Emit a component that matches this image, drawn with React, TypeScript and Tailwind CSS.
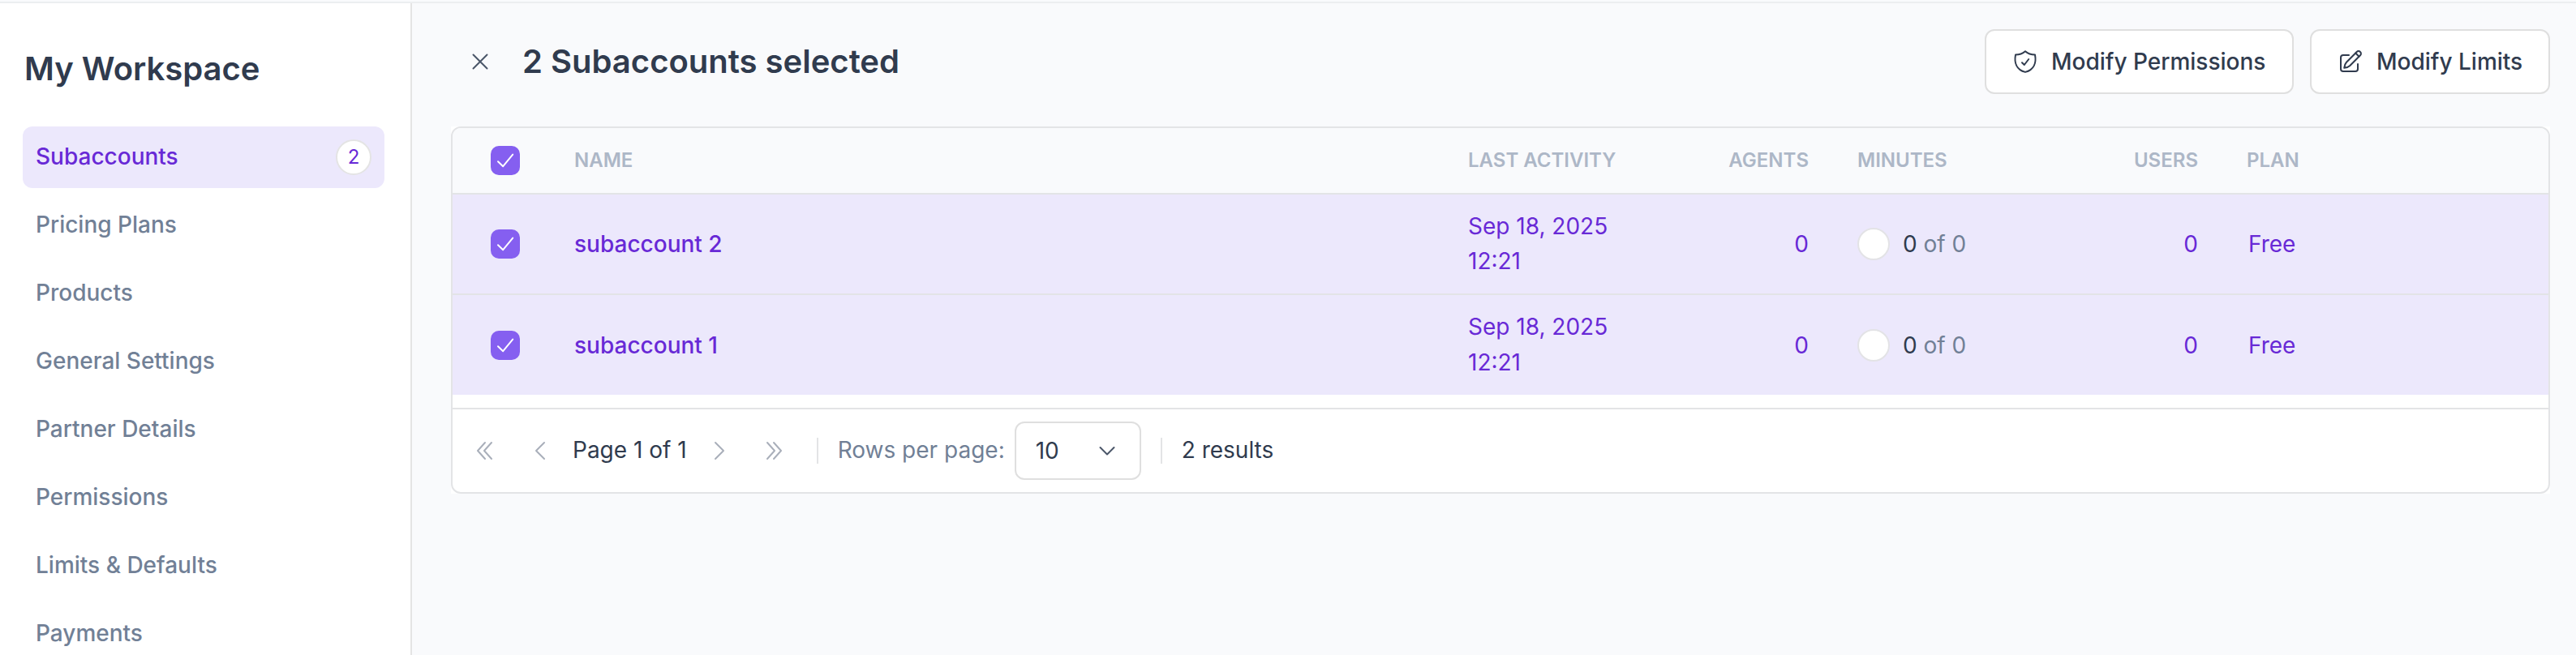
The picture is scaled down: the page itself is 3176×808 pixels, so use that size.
import React from "react";

const NAV = ["Pricing Plans", "Products", "General Settings", "Partner Details", "Permissions", "Limits & Defaults", "Payments"];
const ROWS = ["subaccount 2", "subaccount 1"];

function Check() {
  return (
    <span className="flex size-9 shrink-0 items-center justify-center rounded-[10px] bg-[#855ff0]">
      <svg className="size-9" viewBox="0 0 36 36" fill="none" stroke="#fff" strokeWidth="2" strokeLinecap="round" strokeLinejoin="round">
        <path d="M9 19.2 15.2 25.2 27.2 10.6" />
      </svg>
    </span>
  );
}

function Glyph({ d, className }: { d: string; className: string }) {
  return (
    <svg className={className} viewBox="0 0 32 32" fill="none" stroke="currentColor" strokeWidth="2" strokeLinecap="round" strokeLinejoin="round">
      <path d={d} />
    </svg>
  );
}

const GRID = "grid grid-cols-[150px_1102px_300px_120px_60px_300px_120px_60px_1fr]";

export default function App() {
  return (
    <div className="flex h-[808px] w-[3176px] flex-col overflow-hidden bg-[#f9fafc] font-['Inter',sans-serif] text-[28px] text-[#303b4e]">
      <div className="h-1 shrink-0 border-b-2 border-[#eceef0]" />
      <div className="flex min-h-0 flex-1">
        <aside className="flex w-[508px] shrink-0 flex-col overflow-hidden border-r-2 border-[#e4e4e4] bg-white pl-7 pr-8 pt-[57px]">
          <h1 className="h-12 pl-0.5 text-[40px] leading-[48px] font-semibold">My Workspace</h1>
          <nav className="mt-[47px] flex flex-col gap-2 font-medium text-[#718096]">
            <div className="flex h-[76px] shrink-0 items-center justify-between rounded-xl bg-[#ece8fc] px-4 text-[#6829d6]">
              <span className="pb-0.5">Subaccounts</span>
              <span className="flex size-11 items-center justify-center rounded-full border-2 border-[#e4e4e4] bg-white text-[24px] font-normal">2</span>
            </div>
            {NAV.map((n) => (
              <div key={n} className="flex h-[76px] shrink-0 items-center px-4 pb-0.5">{n}</div>
            ))}
          </nav>
        </aside>
        <main className="flex min-w-0 flex-1 flex-col pl-12 pr-8 pt-8">
          <header className="flex h-20 items-center justify-between">
            <div className="flex items-center pl-5">
              <Glyph className="size-8 text-[#4a5568]" d="M7.5 7.5 24.5 24.5M24.5 7.5 7.5 24.5" />
              <h2 className="ml-9 text-[40px] leading-[48px] font-semibold">2 Subaccounts selected</h2>
            </div>
            <div className="flex gap-5 font-medium">
              <button className="flex h-20 w-[381px] items-center rounded-xl border-2 border-[#dfdfdf] bg-white pl-8">
                <svg className="size-8 shrink-0" viewBox="0 0 32 32" fill="none" stroke="currentColor" strokeWidth="2" strokeLinecap="round" strokeLinejoin="round">
                  <path d="M16 3.300C19 6 23.500 7.600 28 7.600 29.800 17 27 26 16 28.900 5 26 2.200 17 4 7.600 8.500 7.600 13 6 16 3.300Z" />
                  <path d="M12 17.200 14.800 20 20.200 13" />
                </svg>
                <span className="ml-4">Modify Permissions</span>
              </button>
              <button className="flex h-20 w-[296px] items-center rounded-xl border-2 border-[#dfdfdf] bg-white pl-8">
                <svg className="size-8 shrink-0" viewBox="0 0 32 32" fill="none" stroke="currentColor" strokeWidth="2" strokeLinecap="round" strokeLinejoin="round">
                  <path d="M14 8H7a3 3 0 0 0-3 3v14a3 3 0 0 0 3 3h15a3 3 0 0 0 3-3v-6" />
                  <path d="M28 4a3 3 0 0 0-4.300 0L11 16.700C9.400 18.400 8.500 21 8.200 23.800 11 23.500 13.600 22.600 15.300 21L28 8.300A3 3 0 0 0 28 4Z" />
                  <path d="M22.200 5.500 26.500 9.800" />
                </svg>
                <span className="ml-4">Modify Limits</span>
              </button>
            </div>
          </header>
          <section className="mt-10 h-[453px] bg-white">
            <div className="flex h-[453px] flex-col overflow-hidden rounded-[12px] border-2 border-[#e3e4e6]">
              <div className={`${GRID} h-[82px] shrink-0 items-center border-b-2 border-[#e3e4e6] bg-[#f9fafc] text-[24px] font-semibold text-[#adb7c7]`}>
                <span className="pl-[47px]"><Check /></span>
                <span>NAME</span>
                <span>LAST ACTIVITY</span>
                <span className="text-right">AGENTS</span>
                <span />
                <span>MINUTES</span>
                <span className="text-right">USERS</span>
                <span />
                <span>PLAN</span>
              </div>
              {ROWS.map((r, i) => (
                <div key={r} className={`${GRID} shrink-0 items-center bg-[#ece8fc] text-[#6829d6] ${i === 0 ? "h-[124px] border-b-2 border-[#e3e3e6]" : "h-[123px]"}`}>
                  <span className="pl-[47px]"><Check /></span>
                  <span className="font-medium">{r}</span>
                  <span className="leading-[43.4px]">Sep 18, 2025<br />12:21</span>
                  <span className="text-right">0</span>
                  <span />
                  <span className="flex items-center gap-4">
                    <span className="size-10 rounded-full border-2 border-[#e3e3e6] bg-white" />
                    <span className="text-[#718096]"><span className="text-[#303b4e]">0</span> of 0</span>
                  </span>
                  <span className="text-right">0</span>
                  <span />
                  <span className="pl-0.5">Free</span>
                </div>
              ))}
              <footer className="mt-4 flex h-[104px] shrink-0 items-center border-t-2 border-[#e3e4e6]">
                <Glyph className="ml-6 size-8 text-[#a9afba]" d="M16 6 7 16 16 26M24 6 15 16 24 26" />
                <Glyph className="ml-9 size-8 text-[#a9afba]" d="M21 6 11 16 21 26" />
                <span className="ml-6 pb-0.5">Page 1 of 1</span>
                <Glyph className="ml-6 size-8 text-[#a9afba]" d="M11 6 21 16 11 26" />
                <Glyph className="ml-9 size-8 text-[#a9afba]" d="M7 6 16 16 7 26M15 6 24 16 15 26" />
                <span className="ml-9 h-8 w-0.5 bg-[#e3e4e6]" />
                <span className="ml-6 pb-0.5 text-[#718096]">Rows per page:</span>
                <span className="ml-3 flex h-[72px] w-[156px] items-center justify-between rounded-xl border-2 border-[#dfdfdf] pl-6 pr-6">
                  10
                  <Glyph className="size-8 text-[#4a5568]" d="M7.500 12 16 20.500 24.500 12" />
                </span>
                <span className="ml-6 h-8 w-0.5 bg-[#e3e4e6]" />
                <span className="ml-6 pb-0.5">2 results</span>
              </footer>
            </div>
          </section>
        </main>
      </div>
    </div>
  );
}
